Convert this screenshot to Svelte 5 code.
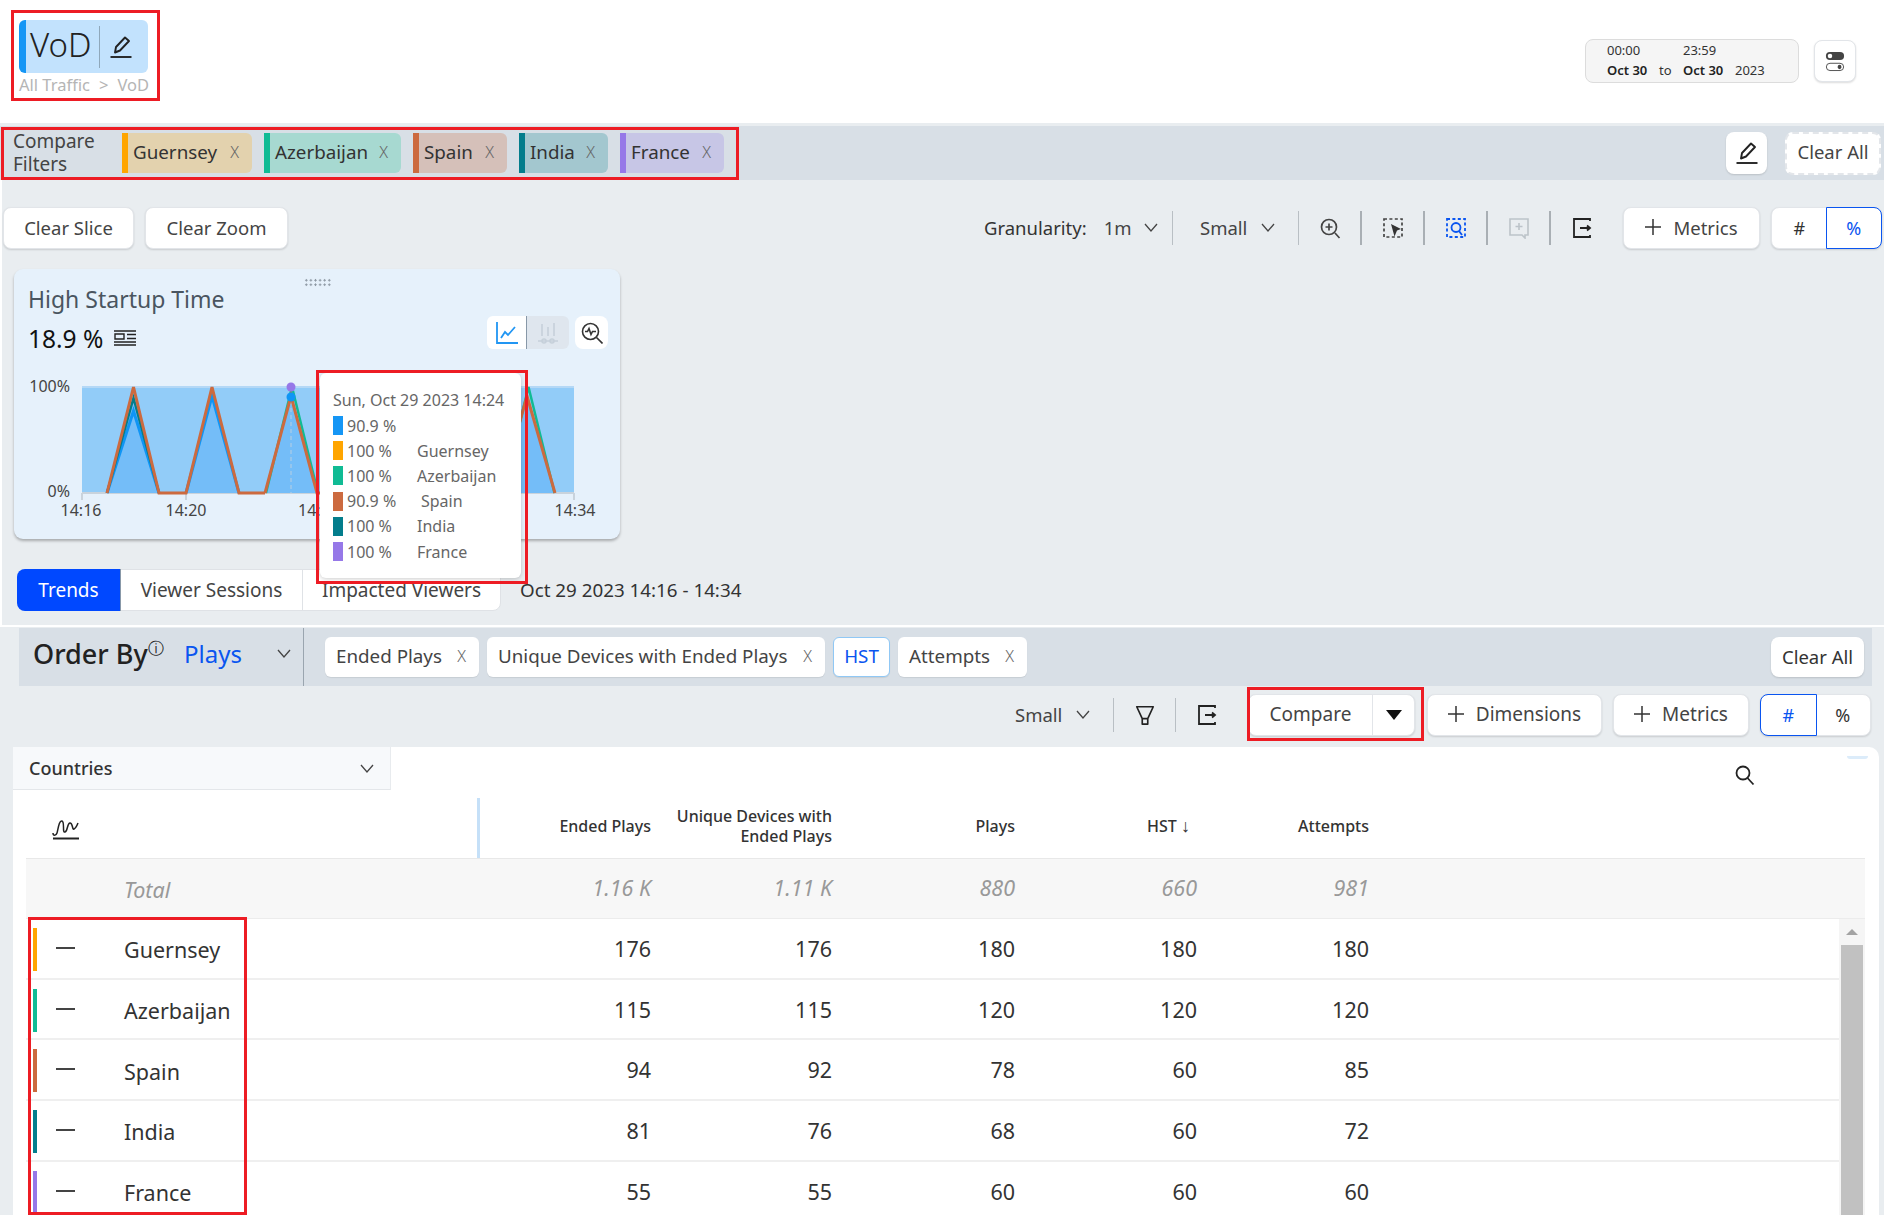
<script>
  const chips = [
    { n: 'Guernsey', c: 'a' },
    { n: 'Azerbaijan', c: 'b' },
    { n: 'Spain', c: 'c' },
    { n: 'India', c: 'd' },
    { n: 'France', c: 'e' }
  ];
  const tips = [
    { c: 'blue', v: '90.9 %', n: '' },
    { c: 'a', v: '100 %', n: 'Guernsey' },
    { c: 'b', v: '100 %', n: 'Azerbaijan' },
    { c: 'c', v: '90.9 %', n: 'Spain', shift: true },
    { c: 'd', v: '100 %', n: 'India' },
    { c: 'e', v: '100 %', n: 'France' }
  ];
  const rows = [
    { c: 'a', n: 'Guernsey', v: [176, 176, 180, 180, 180] },
    { c: 'b', n: 'Azerbaijan', v: [115, 115, 120, 120, 120] },
    { c: 'c', n: 'Spain', v: [94, 92, 78, 60, 85] },
    { c: 'd', n: 'India', v: [81, 76, 68, 60, 72] },
    { c: 'e', n: 'France', v: [55, 55, 60, 60, 60] }
  ];
  const orderChips = ['Ended Plays', 'Unique Devices with Ended Plays'];
  const tri = (p, top) => `${p - 26},493 ${p},${top} ${p + 26},493`;
</script>

{#snippet pencil()}
  <svg class="pen" viewBox="0 0 24 24" fill="none" stroke="#222" stroke-width="1.9"><path d="M6 17.5l1-5.5L16 2.5l4 3.5-9 9.5z" stroke-linejoin="round"/><path d="M1.5 22h21"/></svg>
{/snippet}
{#snippet chev()}
  <svg class="chev" viewBox="0 0 14 9" fill="none" stroke="#444" stroke-width="1.3"><path d="M1 1l6 7 6-7"/></svg>
{/snippet}
{#snippet exportIcon()}
  <svg class="ico" viewBox="0 0 22 22" fill="none" stroke="#222" stroke-width="1.8"><path d="M19 4V2H3v18h16v-2"/><path d="M9 11h10M16 8.5l3 2.5-3 2.5"/></svg>
{/snippet}
{#snippet plus()}
  <svg class="plus" viewBox="0 0 16 16" stroke="#333" stroke-width="1.5"><path d="M8 0v16M0 8h16"/></svg>
{/snippet}

<div class="page">
  <header class="top">
    <div class="crumbwrap">
      <div class="vod">
        <span class="vodtext">VoD</span>
        <span class="vodsep"></span>
        {@render pencil()}
      </div>
      <div class="crumb"><span>All Traffic</span><span>&gt;</span><span>VoD</span></div>
    </div>
    <div class="dates">
      <div class="dategrid">
        <span>00:00</span><span></span><span>23:59</span><span></span>
        <b>Oct 30</b><span>to</span><b>Oct 30</b><span>2023</span>
      </div>
    </div>
    <button class="btn square">
      <svg viewBox="0 0 22 24" width="20" height="24"><rect x="1" y="2" width="20" height="9" rx="4.5" fill="#444"/><circle cx="5.5" cy="6.5" r="2.5" fill="#fff"/><rect x="1.5" y="14.5" width="19" height="8" rx="4" fill="#fff" stroke="#444"/><rect x="14" y="16" width="4" height="5" rx="2" fill="#444"/></svg>
    </button>
  </header>
  <div class="sep"></div>

  <section class="filters">
    <div class="cflabel">Compare<br />Filters</div>
    {#each chips as c}
      <div class="chip {c.c}"><span>{c.n}</span><span class="x">X</span></div>
    {/each}
    <button class="btn fpen">{@render pencil()}</button>
    <button class="btn clearall dashed">Clear All</button>
  </section>

  <section class="upper">
    <div class="toolbar">
      <button class="btn tb">Clear Slice</button>
      <button class="btn tb zoom">Clear Zoom</button>
      <div class="gran"><span>Granularity:</span><span class="gv">1m</span>{@render chev()}</div>
      <i class="div"></i>
      <div class="smallsel"><span>Small</span>{@render chev()}</div>
      <i class="div"></i>
      <div class="slot"><svg class="ico" viewBox="0 0 22 22" fill="none" stroke="#444" stroke-width="1.7"><circle cx="10" cy="10" r="7.5"/><path d="M16 16l4.5 5M10 6.5v7M6.5 10h7"/></svg></div>
      <i class="div d2"></i>
      <div class="slot"><svg class="ico" viewBox="0 0 22 22" fill="none"><path d="M2 2h18v18H2z" stroke="#444" stroke-width="1.7" stroke-dasharray="3 2.4"/><path d="M9 7l10 5-4 1.5-2.5 6z" fill="#333"/></svg></div>
      <i class="div d2"></i>
      <div class="slot"><svg class="ico" viewBox="0 0 22 22" fill="none" stroke="#0a55f0" stroke-width="1.8"><path d="M2 2h18v18H2z" stroke-dasharray="3 2.4"/><circle cx="11" cy="10.5" r="4.5"/><path d="M14 14l3 4"/></svg></div>
      <i class="div d2"></i>
      <div class="slot"><svg class="ico" viewBox="0 0 22 22" fill="none" stroke="#bcc3c9" stroke-width="1.6"><path d="M2 2h18v16h-3v3l-3-3H2z"/><path d="M11 6v7M7.5 9.5h7"/></svg></div>
      <i class="div d2"></i>
      <div class="slot">{@render exportIcon()}</div>
      <button class="btn addbtn metrics1">{@render plus()}<span>Metrics</span></button>
      <div class="toggle t1"><span>#</span><span class="on">%</span></div>
    </div>

    <div class="card">
      <div class="grip"></div>
      <div class="cardtitle">High Startup Time</div>
      <div class="cardval">
        <span>18.9 %</span>
        <svg viewBox="0 0 22 16" width="22" height="16" fill="none" stroke="#222" stroke-width="1.4"><path d="M0 1h22M0 15h22M0 12h22"/><path d="M1 4h9v5H1zM13 4.5h9M13 8.5h9"/></svg>
        <div class="cardbtns">
          <div class="cb active"><svg viewBox="0 0 22 22" width="22" height="22" fill="none" stroke="#2196f3" stroke-width="1.8"><path d="M1 0v21h21"/><path d="M5 16l4-6 3 3 7-8"/></svg></div>
          <div class="cb off"><svg viewBox="0 0 22 22" width="22" height="22" fill="none" stroke="#c6d0da" stroke-width="1.6"><path d="M5 2v12M11 5v9M17 1v13M1 19h20"/><circle cx="7" cy="19" r="2"/><circle cx="15" cy="19" r="2"/></svg></div>
          <div class="cb zoomb"><svg viewBox="0 0 22 22" width="22" height="22" fill="none" stroke="#333" stroke-width="1.6"><circle cx="9.5" cy="9.5" r="8"/><path d="M15.5 15.5l6 6M4 9.5h2.5l1.5-3 2 6 1.5-3H15"/></svg></div>
        </div>
      </div>
      <svg class="chart" viewBox="14 375 606 150" width="606" height="150">
        <rect x="82" y="387" width="492" height="106" fill="#92ccf8"/>
        <path d="M82 387H574" stroke="#b4d8f6" stroke-width="2"/>
        <path d="M82 493H574" stroke="#c9d3dc" stroke-width="2"/>
        <path d="M82 493v7M186 493v7M574 493v7" stroke="#c9d3dc" stroke-width="2"/>
        <polygon points="107,493 133.5,400 159,493" fill="#74bdf8"/>
        <polygon points="186,493 212,395 239,493" fill="#74bdf8"/>
        <polygon points="265,493 291,397 317,493" fill="#74bdf8"/>
        <polygon points="500,493 527,395 555,493" fill="#74bdf8"/>
        <path d="M291 387V493" stroke="#b7cfe3" stroke-dasharray="4 3"/>
        <polyline points="107,493 133.5,411 159,493" fill="none" stroke="#0f95f5" stroke-width="3"/>
        <polyline points="107,493 133.5,398 159,493" fill="none" stroke="#037d8c" stroke-width="2.5"/>
        <polyline points="186,493 212,396 239,493" fill="none" stroke="#0f95f5" stroke-width="3"/>
        <polyline points={tri(291, 387)} fill="none" stroke="#10bb94" stroke-width="2.5" transform="translate(1 0)"/>
        <polyline points={tri(527, 387)} fill="none" stroke="#10bb94" stroke-width="2.5" transform="translate(1.5 0)"/>
        <polyline points="265,493 291,396 317,493 500,493 527,396 555,493" fill="none" stroke="#cc6a3f" stroke-width="3"/>
        <polyline points="107,493 133.5,387 159,493 186,493 212,387 239,493 265,493" fill="none" stroke="#cc6a3f" stroke-width="3"/>
        <circle cx="291" cy="397" r="4.5" fill="#0f95f5"/>
        <circle cx="291" cy="387" r="4.5" fill="#9678e8"/>
        <g class="axis">
          <text x="70" y="392" text-anchor="end">100%</text>
          <text x="70" y="497" text-anchor="end">0%</text>
          <text x="81" y="516" text-anchor="middle">14:16</text>
          <text x="186" y="516" text-anchor="middle">14:20</text>
          <text x="298" y="516">14:24</text>
          <text x="575" y="516" text-anchor="middle">14:34</text>
        </g>
      </svg>
    </div>

    <div class="tabsrow">
      <div class="tabs">
        <span class="tab active">Trends</span>
        <span class="tab vs">Viewer Sessions</span>
        <span class="tab iv">Impacted Viewers</span>
      </div>
      <span class="range">Oct 29 2023 14:16 - 14:34</span>
    </div>
  </section>

  <div class="whiteline"></div>

  <section class="lower">
    <div class="orderbar">
      <div class="orderby">
        <span class="oblabel">Order By<sup>ⓘ</sup></span>
        <span class="obval">Plays</span>
        {@render chev()}
      </div>
      <div class="ochips">
        {#each orderChips as o}
          <div class="ochip"><span>{o}</span><span class="x">X</span></div>
        {/each}
        <div class="ochip hst">HST</div>
        <div class="ochip"><span>Attempts</span><span class="x">X</span></div>
      </div>
      <button class="btn clearall2">Clear All</button>
    </div>

    <div class="toolbar2">
      <div class="small2"><span>Small</span>{@render chev()}</div>
      <i class="div"></i>
      <div class="slot"><svg class="ico" viewBox="0 0 22 24" fill="none" stroke="#222" stroke-width="1.8"><path d="M2 3h18l-6 13H8zM8 16h6v6H8z" stroke-linejoin="round"/></svg></div>
      <i class="div"></i>
      <div class="slot">{@render exportIcon()}</div>
      <div class="btn compare"><span class="cmp">Compare</span><span class="caret"></span></div>
      <button class="btn addbtn dims">{@render plus()}<span>Dimensions</span></button>
      <button class="btn addbtn metrics2">{@render plus()}<span>Metrics</span></button>
      <div class="toggle t2"><span class="on">#</span><span>%</span></div>
    </div>

    <div class="panel">
      <div class="paneltop">
        <div class="countries"><span>Countries</span>{@render chev()}</div>
        <svg class="search" viewBox="0 0 20 20" fill="none" stroke="#222" stroke-width="1.8"><circle cx="8" cy="8" r="6.5"/><path d="M12.5 13l6 6.5"/></svg>
      </div>
      <div class="tablewrap">
        <div class="grid head">
          <div class="hfirst">
            <svg viewBox="0 0 28 24" width="28" height="24" fill="none" stroke="#222" stroke-width="1.5"><path d="M1 17c0 3 3 3 4 0s2-13 5-12 0 12 3 11 2-9 5-9 2 7 4 6 4-6 4-6"/><path d="M1 22.5h26" stroke-width="2"/></svg>
          </div>
          <div class="hc">Ended Plays</div>
          <div class="hc">Unique Devices with<br />Ended Plays</div>
          <div class="hc">Plays</div>
          <div class="hc hst-h">HST <span class="arrow">↓</span></div>
          <div class="hc">Attempts</div>
        </div>
        <div class="grid total">
          <div class="tname">Total</div>
          <div class="num">1.16 K</div><div class="num">1.11 K</div><div class="num">880</div><div class="num">660</div><div class="num">981</div>
        </div>
        <div class="bodyarea">
          <div class="rows">
            {#each rows as r}
              <div class="grid row">
                <div class="rname">
                  <i class="rbar {r.c}"></i>
                  <i class="minus"></i>
                  <span>{r.n}</span>
                </div>
                {#each r.v as v}<div class="num">{v}</div>{/each}
              </div>
            {/each}
          </div>
          <div class="scroll"><div class="up"></div><div class="thumb"></div></div>
        </div>
      </div>
    </div>
  </section>

  <div class="tooltip">
    <div class="ttitle">Sun, Oct 29 2023 14:24</div>
    {#each tips as t}
      <div class="trow">
        <i class="sw {t.c}"></i><span class="tv">{t.v}</span><span class="tn" class:shift={t.shift}>{t.n}</span>
      </div>
    {/each}
  </div>

  <i class="red r1"></i>
  <i class="red r2"></i>
  <i class="red r3"></i>
  <i class="red r4"></i>
  <i class="red r5"></i>
</div>

<style>
  :global(body) { margin: 0; background: #fff; }
  * { box-sizing: border-box; }
  .page { position: relative; width: 1884px; height: 1232px; overflow: hidden; background: #fff; font-family: "Noto Sans", "Open Sans", sans-serif; color: #333; }
  button { font: inherit; color: inherit; }
  .btn { background: #fff; border: 1px solid #e2e5e9; border-radius: 8px; box-shadow: 0 1px 2px rgba(0,0,0,.14); font-size: 18.5px; padding: 0 0 2px; display: flex; align-items: center; justify-content: center; }
  .pen { width: 24px; height: 24px; display: block; }
  .chev { width: 14px; height: 9px; display: block; flex: none; }
  .ico { width: 22px; height: 22px; display: block; }
  .plus { width: 16px; height: 16px; display: block; }

  .top { height: 123px; display: flex; align-items: flex-start; padding: 20px 0 0 19px; }
  .crumbwrap { width: 140px; margin-right: auto; }
  .vod { width: 129px; height: 53px; background: #c2e2fd; border-left: 7px solid #1596f5; border-radius: 6px; display: flex; align-items: center; }
  .vodtext { font-size: 33px; font-weight: 300; color: #222; margin-left: 4px; width: 69px; padding-bottom: 4px; }
  .vodsep { width: 1px; height: 42px; background: #8fa8bb; margin-right: 9px; }
  .crumb { margin-top: 1px; font-size: 16.5px; line-height: 22px; color: #b5b5b5; display: flex; gap: 9px; white-space: nowrap; }
  .dates { width: 214px; height: 44px; margin-top: 19px; background: #f5f5f5; border: 1px solid #dcdcdc; border-radius: 8px; padding: 0 0 0 21px; }
  .dategrid { display: grid; grid-template-columns: 52px 24px 52px auto; font-size: 13px; line-height: 20px; color: #333; white-space: nowrap; }
  .dategrid b { font-weight: 600; color: #222; }
  .square { width: 42px; height: 42px; margin: 20px 28px 0 15px; padding: 0; }
  .sep { height: 3px; background: #e9edf0; }

  .filters { height: 54px; background: #d8dfe6; display: flex; align-items: center; padding-left: 13px; position: relative; }
  .cflabel { width: 109px; font-size: 19px; line-height: 23px; color: #444; padding-bottom: 1px; }
  .chip { height: 40px; margin-right: 12px; border-radius: 0 6px 6px 0; border-left: 6px solid; display: flex; align-items: center; padding: 0 13px 3px 5px; font-size: 18.8px; color: #333; justify-content: space-between; white-space: nowrap; }
  .x { font-size: 16px; font-weight: 300; color: #666; }
  .chip:nth-of-type(2) { width: 130px; background: #e3d2ae; border-color: #ffa500; }
  .chip:nth-of-type(3) { width: 137px; background: #a7d9d1; border-color: #10bb94; }
  .chip:nth-of-type(4) { width: 94px; background: #d5c0b9; border-color: #cc6a3f; }
  .chip:nth-of-type(5) { width: 89px; background: #a3c7cf; border-color: #037d8c; }
  .chip:nth-of-type(6) { width: 104px; background: #c7c6e6; border-color: #9678e8; }
  .fpen { width: 41px; height: 42px; margin-left: auto; border: none; padding: 0; }
  .clearall { width: 96px; height: 43px; margin: 0 3px 0 18px; color: #444; padding-bottom: 3px; }
  .dashed { border: 2px dashed #e3e6ea; box-shadow: none; }

  .upper { height: 445px; background: #e9edf0; padding-top: 27px; border-left: 2px solid #fff; }
  .toolbar { height: 42px; display: flex; align-items: center; padding-left: 1px; }
  .tb { width: 131px; height: 42px; color: #444; }
  .tb.zoom { width: 143px; margin-left: 11px; }
  .gran { margin-left: 696px; width: 188px; display: flex; align-items: center; font-size: 18.5px; color: #333; padding-bottom: 2px; }
  .gv { margin-left: 17px; color: #444; margin-right: 12px; }
  .div { width: 1px; height: 34px; background: #b9bfc4; flex: none; display: block; }
  .d2 { background: #a9afb4; width: 2px; }
  .smallsel { width: 125px; padding: 0 0 2px 27px; display: flex; align-items: center; gap: 14px; font-size: 18.5px; color: #444; }
  .slot { width: 61px; display: flex; justify-content: center; flex: none; }
  .addbtn { gap: 12px; color: #444; }
  .metrics1 { width: 137px; height: 42px; margin-left: 11px; }
  .toggle { height: 42px; display: flex; background: #fff; border: 1px solid #e2e5e9; border-radius: 8px; box-shadow: 0 1px 2px rgba(0,0,0,.14); font-size: 18px; color: #333; }
  .toggle span { flex: 1; display: flex; align-items: center; justify-content: center; }
  .toggle .on { color: #0a55f0; border: 1.5px solid #0a55f0; margin: -1px; }
  .t1 { width: 111px; margin-left: 11px; }
  .t1 .on { border-radius: 0 8px 8px 0; }

  .card { position: relative; width: 606px; height: 270px; margin: 20px 0 0 12px; background: #e6f1fb; border-radius: 9px; box-shadow: 0 2px 3px rgba(0,0,0,.28); padding: 14px 0 0 14px; }
  .grip { position: absolute; left: 290px; top: 9px; width: 28px; height: 9px; background-image: radial-gradient(circle, #8d98a3 1px, transparent 1.2px); background-size: 4.6px 4.5px; }
  .cardtitle { font-size: 23px; line-height: 32px; color: #4a5560; }
  .cardval { height: 36px; margin-top: 5px; display: flex; align-items: center; gap: 11px; font-size: 24.5px; color: #111; position: relative; }
  .cardbtns { position: absolute; left: 459px; top: -4px; display: flex; }
  .cb { height: 33px; display: flex; align-items: center; justify-content: center; }
  .active { width: 40px; background: #fff; border-radius: 6px 0 0 6px; border-right: 1px solid #8898a8; }
  .off { width: 42px; background: #dfe6ee; border-radius: 0 6px 6px 0; }
  .zoomb { width: 33px; margin-left: 6px; background: #fff; border-radius: 8px; }
  .chart { position: absolute; left: 0; top: 106px; display: block; }
  .axis text { font-family: "Noto Sans", sans-serif; font-size: 16px; fill: #444; }

  .tabsrow { margin: 30px 0 0 15px; height: 42px; display: flex; align-items: center; }
  .tabs { display: flex; height: 42px; background: #fff; border: 1px solid #dfe2e6; border-radius: 8px; font-size: 19px; color: #444; }
  .tab { display: flex; align-items: center; justify-content: center; }
  .tab.active { width: 104px; margin: -1px 0 -1px -1px; background: #0048ff; color: #fff; border-radius: 8px 0 0 8px; }
  .vs { width: 182px; border-right: 1px solid #dfe2e6; }
  .iv { width: 197px; }
  .range { margin-left: 19px; font-size: 18.8px; color: #333; }

  .whiteline { height: 3px; background: #fff; border-bottom: 1px solid #e9edf0; }

  .lower { height: 587px; background: #e9edf0; padding-top: 0; overflow: hidden; }
  .orderbar { height: 58px; margin: 0 12px 0 19px; background: #d8dfe6; display: flex; align-items: center; }
  .orderby { width: 285px; height: 58px; border-right: 1px solid #9aa5af; display: flex; align-items: center; padding: 0 0 7px 14px; }
  .oblabel { font-size: 27px; font-weight: 500; color: #222; width: 151px; white-space: nowrap; }
  .oblabel sup { font-size: 16px; font-weight: 400; line-height: 0; }
  .obval { font-size: 24px; color: #0a55f0; width: 93px; }
  .ochips { display: flex; gap: 8px; margin-left: 21px; }
  .ochip { height: 40px; background: #fff; border-radius: 6px; display: flex; align-items: center; justify-content: space-between; padding: 0 13px 2px 11px; font-size: 18.8px; color: #444; box-shadow: 0 1px 1px rgba(0,0,0,.08); white-space: nowrap; }
  .ochip:nth-child(1) { width: 154px; }
  .ochip:nth-child(2) { width: 338px; }
  .ochip:nth-child(4) { width: 129px; }
  .ochip.hst { width: 57px; justify-content: center; padding: 0 0 2px; color: #0a55f0; border: 1px solid #90c8f5; }
  .clearall2 { width: 93px; height: 40px; margin-left: auto; margin-right: 8px; border: none; color: #333; }

  .toolbar2 { height: 42px; margin-top: 8px; display: flex; align-items: center; padding-left: 1015px; }
  .small2 { width: 98px; display: flex; align-items: center; gap: 14px; font-size: 18.5px; color: #444; padding-bottom: 2px; }
  .compare { width: 167px; height: 42px; margin-left: 11px; justify-content: flex-start; font-size: 19px; padding: 0; }
  .cmp { width: 124px; height: 40px; border-right: 1px solid #e2e5e9; display: flex; align-items: center; justify-content: center; color: #444; padding-bottom: 2px; }
  .caret { margin-left: 13px; border-left: 8px solid transparent; border-right: 8px solid transparent; border-top: 10px solid #111; }
  .dims { width: 175px; height: 42px; margin-left: 12px; font-size: 19px; }
  .metrics2 { width: 136px; height: 42px; margin-left: 11px; font-size: 19px; }
  .t2 { width: 111px; margin-left: 11px; }
  .t2 .on { border-radius: 8px 0 0 8px; }

  .panel { position: relative; margin: 11px 5px 0 13px; height: 468px; background: #fff; border-radius: 0 10px 0 0; overflow: hidden; }
  .panel::after { content: ""; position: absolute; right: 11px; top: 9px; width: 21px; height: 3px; background: #dcecfa; border-radius: 0 0 10px 10px; }
  .paneltop { height: 43px; display: flex; justify-content: space-between; }
  .countries { width: 378px; height: 43px; background: #f7f9fb; border-bottom: 1px solid #e4e7ea; border-right: 1px solid #e8ebee; display: flex; align-items: center; justify-content: space-between; padding: 0 16px 0 16px; font-size: 18px; font-weight: 500; color: #333; }
  .search { width: 20px; height: 22px; margin: 17px 124px 0 0; }

  .tablewrap { padding: 0 14px 0 13px; }
  .grid { display: grid; grid-template-columns: 454px 171px 181px 183px 182px 172px 1fr; }
  .head { height: 69px; align-items: center; border-bottom: 1px solid #e8e8e8; font-size: 16px; font-weight: 500; color: #333; }
  .hfirst { padding: 0 0 0 26px; height: 60px; margin-top: 8px; width: 454px; border-right: 3px solid #c5e0f8; display: flex; align-items: center; }
  .hc { text-align: right; line-height: 20px; padding-top: 4px; }
  .arrow { font-size: 18px; font-weight: 400; line-height: 0; }
  .hst-h { padding-right: 7px; }
  .total { height: 60px; background: #f7f7f7; border-bottom: 1px solid #ececec; align-items: center; font-style: italic; color: #999; font-size: 21.5px; }
  .tname { padding: 2px 0 0 98px; font-size: 21.5px; }
  .total .num { padding-bottom: 2px; }
  .num { text-align: right; }
  .bodyarea { display: flex; }
  .rows { width: 1813px; }
  .row { height: 60.7px; border-bottom: 2px solid #efefef; align-items: center; font-size: 21.5px; color: #333; }
  .rname { display: flex; align-items: center; height: 100%; position: relative; font-size: 21.5px; }
  .rname span { margin: 3px 0 0 98px; }
  .rbar { position: absolute; left: 7px; top: 9px; width: 4px; height: 43px; }
  .minus { position: absolute; left: 30px; top: 28px; width: 19px; height: 2px; background: #444; }
  .rbar.a { background: #ffa500; } .rbar.b { background: #10bb94; } .rbar.c { background: #cc6a3f; } .rbar.d { background: #037d8c; } .rbar.e { background: #9678e8; }
  .scroll { width: 26px; background: #f5f5f5; padding: 0 2px; height: 297px; }
  .up { height: 26px; position: relative; }
  .up::after { content: ""; position: absolute; left: 5px; top: 10px; border-left: 6px solid transparent; border-right: 6px solid transparent; border-bottom: 6px solid #a3a3a3; }
  .thumb { height: 271px; background: #c1c1c1; }

  .tooltip { position: absolute; left: 320px; top: 373px; width: 201px; height: 205px; background: #fff; border-radius: 6px; box-shadow: 0 1px 4px rgba(0,0,0,.2); padding: 16px 0 0 13px; font-size: 16px; color: #666; }
  .ttitle { line-height: 22px; margin-bottom: 2px; white-space: nowrap; }
  .trow { height: 25.2px; display: flex; align-items: center; white-space: nowrap; }
  .sw { width: 10px; height: 19px; flex: none; margin-right: 4px; }
  .sw.blue { background: #1596f5; } .sw.a { background: #ffa500; } .sw.b { background: #10bb94; } .sw.c { background: #cc6a3f; } .sw.d { background: #037d8c; } .sw.e { background: #9678e8; }
  .tv { width: 70px; flex: none; }
  .tn.shift { margin-left: 4px; }

  .red { position: absolute; border: 3px solid #ed1c24; display: block; pointer-events: none; }
  .r1 { left: 11px; top: 10px; width: 149px; height: 91px; }
  .r2 { left: 1px; top: 127px; width: 738px; height: 53px; }
  .r3 { left: 316px; top: 370px; width: 212px; height: 214px; }
  .r4 { left: 1247px; top: 687px; width: 177px; height: 54px; }
  .r5 { left: 28px; top: 917px; width: 219px; height: 298px; }
</style>
